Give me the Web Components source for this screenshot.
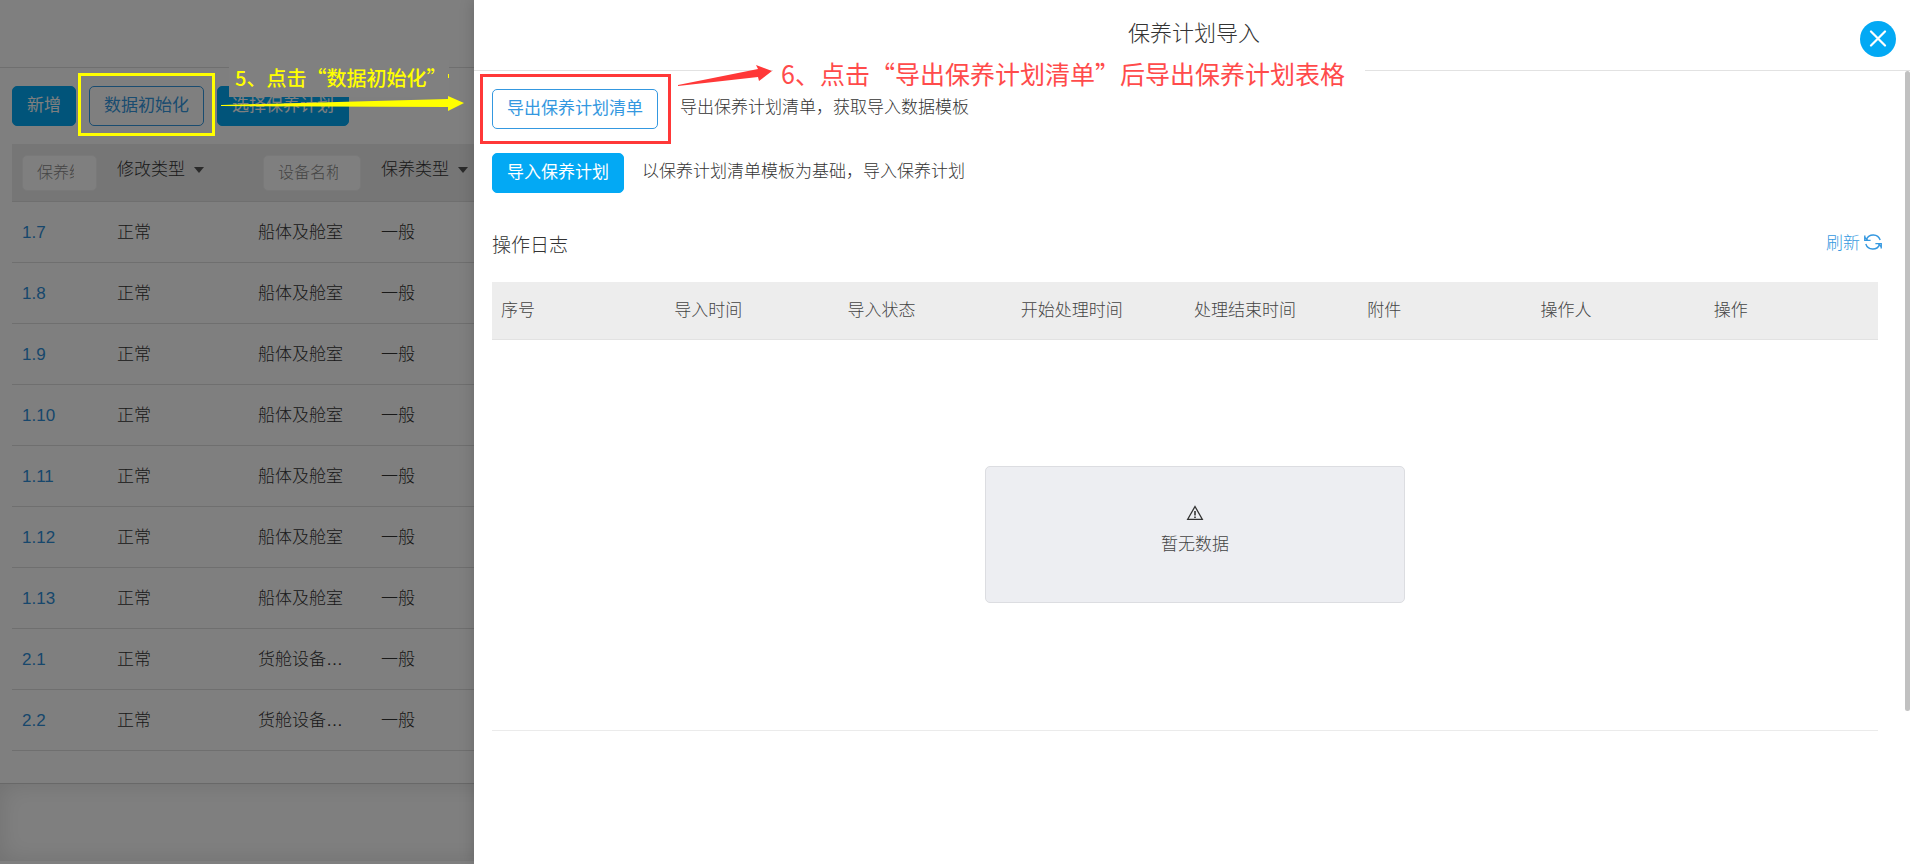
<!DOCTYPE html>
<html lang="zh-CN">
<head>
<meta charset="utf-8">
<title>保养计划导入</title>
<style>
  html, body { margin: 0; height: 100%; overflow: hidden; }
  body {
    font-family: "Liberation Sans", "Noto Sans CJK SC", sans-serif;
    font-size: 17px; font-weight: 300; line-height: 24px; color: #333; background: #fff;
  }
</style>
</head>
<body>
<maintenance-app></maintenance-app>

<script>
const define = (name, html, setup) => {
  const template = document.createElement('template');
  template.innerHTML = html;
  customElements.define(name, class extends HTMLElement {
    constructor() {
      super();
      this.attachShadow({ mode: 'open' }).append(template.content.cloneNode(true));
    }
    connectedCallback() { if (setup) setup(this, this.shadowRoot); }
  });
};

define('ui-button', `
  <style>
    :host { display: inline-block; }
    button {
      display: block; box-sizing: border-box; height: 40px; padding: 0 14px; margin: 0;
      border: 1px solid #03a9f4; border-radius: 5px; background: #03a9f4; color: #fff;
      font: inherit; font-weight: 400; white-space: nowrap; cursor: pointer;
    }
    :host([outline]) button { background: transparent; color: #3498e0; border-color: #3498e0; }
  </style>
  <button type="button"><slot></slot></button>`);

define('filter-input', `
  <style>
    :host { display: block; }
    input {
      display: block; box-sizing: border-box; width: 100%; height: 36px; margin: 0;
      padding: 0 22px 0 14px; border: 1px solid #f2f2f2; border-radius: 5px; background: #fff;
      font: inherit; font-size: 16px;
    }
    input::placeholder { color: #8a8a8a; opacity: 1; }
  </style>
  <input type="text">`, (host, root) => {
    const input = root.querySelector('input');
    input.placeholder = host.getAttribute('label');
    input.setAttribute('aria-label', host.getAttribute('label'));
  });

define('filter-select', `
  <style>
    :host { display: flex; align-items: center; gap: 9px; padding-bottom: 6px; }
    select {
      appearance: none; border: 0; margin: 0; padding: 0; background: none;
      font: inherit; color: #333; height: 24px;
    }
    svg { display: block; flex: none; }
  </style>
  <select><option></option></select>
  <svg width="10" height="6" viewBox="0 0 10 6"><path d="M0 0h10L5 6z" fill="#555"/></svg>`, (host, root) => {
    root.querySelector('option').textContent = host.getAttribute('label');
    root.querySelector('select').setAttribute('aria-label', host.getAttribute('label'));
  });

define('plan-table', `
  <style>
    :host { display: block; }
    table { width: 100%; border-collapse: separate; border-spacing: 0; table-layout: fixed; }
    th, td { box-sizing: border-box; padding: 0; text-align: left; font-weight: inherit; border-bottom: 1px solid #dedede; }
    th { height: 58px; background: #ececec; }
    td { height: 61px; padding-top: 2px; white-space: nowrap; overflow: hidden; text-overflow: ellipsis; }
    th:first-child, td:first-child { padding-left: 10px; }
    th:nth-child(3) { padding-left: 5px; }
    .c1 { width: 105px } .c2 { width: 141px } .c3 { width: 123px } .c4 { width: 93px }
    th:nth-child(1) { padding-right: 20px; }
    th:nth-child(3) { padding-right: 20px; }
    a { color: #2f8fd8; text-decoration: none; font-weight: 400; }
  </style>
  <table>
    <colgroup><col class="c1"><col class="c2"><col class="c3"><col class="c4"><col></colgroup>
    <thead><tr>
      <th><filter-input label="保养编号"></filter-input></th>
      <th><filter-select label="修改类型"></filter-select></th>
      <th><filter-input label="设备名称"></filter-input></th>
      <th><filter-select label="保养类型"></filter-select></th>
      <th></th>
    </tr></thead>
    <tbody></tbody>
  </table>`, (host, root) => {
    const hull = '船体及舱室', cargo = '货舱设备…';
    const rows = [['1.7', hull], ['1.8', hull], ['1.9', hull], ['1.10', hull], ['1.11', hull],
      ['1.12', hull], ['1.13', hull], ['2.1', cargo], ['2.2', cargo]];
    root.querySelector('tbody').innerHTML = rows.map(([code, device]) =>
      `<tr><td><a href="#">${code}</a></td><td>正常</td><td>${device}</td><td>一般</td><td></td></tr>`).join('');
  });

define('plan-page', `
  <style>
    :host { display: flex; flex-direction: column; min-height: 100vh; background: #fff; }
    header { height: 67px; border-bottom: 1px solid #dedede; }
    main { padding: 18px 0 32px 12px; border-bottom: 1px solid #d0d0d0; }
    nav { display: flex; gap: 13px; margin-bottom: 18px; }
    footer { flex: 1; margin-bottom: 3px; box-shadow: inset 0 0 24px rgba(0,0,0,.12); }
  </style>
  <header></header>
  <main>
    <nav>
      <ui-button>新增</ui-button>
      <ui-button outline>数据初始化</ui-button>
      <ui-button>选择保养计划</ui-button>
    </nav>
    <plan-table></plan-table>
  </main>
  <footer></footer>`);

define('empty-notice', `
  <style>
    :host {
      display: flex; flex-direction: column; align-items: center; justify-content: center; gap: 12px;
      box-sizing: border-box; width: 420px; height: 137px; padding-bottom: 8px;
      border: 1px solid #dcdde1; border-radius: 5px; background: #edeef2; color: #444;
    }
    svg { display: block; }
  </style>
  <svg width="18" height="16" viewBox="0 0 18 16" fill="none" stroke="#333">
    <path d="M9 1.5 16.3 14.3H1.7z" stroke-width="1.3"/>
    <path d="M9 6v4.5M9 11.4v1.5" stroke-width="1.6"/>
  </svg>
  <slot></slot>`);

define('operation-log', `
  <style>
    :host { display: block; }
    .bar { display: flex; justify-content: space-between; padding-right: 16px; margin-bottom: 22px; }
    h2 { margin: 0; font-size: 19px; font-weight: 300; line-height: 28px; }
    a { display: flex; align-items: center; gap: 4px; height: 24px; color: #3498e0; text-decoration: none; }
    svg { display: block; margin-bottom: 4px; }
    .list { margin-right: 20px; }
    table { width: 100%; table-layout: fixed; border-spacing: 0; }
    th {
      box-sizing: border-box; height: 58px; padding: 0 0 0 9px; text-align: left; font-weight: 300;
      color: #444; background: #ededed; border-bottom: 1px solid #e2e2e2;
    }
    .empty { display: flex; justify-content: center; padding: 126px 0 127px; }
    hr { margin: 0 20px 0 0; border: 0; border-top: 1px solid #ebebeb; }
  </style>
  <div class="bar">
    <h2>操作日志</h2>
    <a href="#">刷新
      <svg width="18" height="18" viewBox="0 0 18 18" fill="none" stroke="#3498e0" stroke-width="1.4">
        <path d="M2.4 6.4A7.4 7.4 0 0 1 16.2 7M15.6 11.6A7.4 7.4 0 0 1 1.8 11"/>
        <path d="M.8 2.4V7.4H6.6M17.2 15.6V10.6H11.4"/>
        <path d="M.8 4.6 3.6 7.2M17.2 13.4 14.4 10.8"/>
      </svg>
    </a>
  </div>
  <div class="list">
    <table><thead><tr>
      <th>序号</th><th>导入时间</th><th>导入状态</th><th>开始处理时间</th>
      <th>处理结束时间</th><th>附件</th><th>操作人</th><th>操作</th>
    </tr></thead></table>
  </div>
  <div class="empty"><empty-notice>暂无数据</empty-notice></div>
  <hr>`);

define('import-drawer', `
  <style>
    :host { display: flex; flex-direction: column; background: #fff; box-shadow: 0 0 14px rgba(0,0,0,.18); }
    header {
      display: grid; grid-template-columns: 1fr 50px; align-items: start; box-sizing: border-box;
      height: 71px; border-bottom: 1px solid #e2e2e2;
    }
    h1 { margin: 18px 0 0 54px; text-align: center; font-size: 22px; line-height: 32px; font-weight: 300; }
    header button {
      display: grid; place-items: center; width: 36px; height: 36px; margin: 21px 0 0; padding: 0;
      border: 0; border-radius: 50%; background: #03a9f4; cursor: pointer;
    }
    .body { flex: 1; display: grid; grid-template-columns: 1fr 5px; }
    .content { padding: 18px 7px 0 18px; }
    .action { display: flex; align-items: center; height: 40px; margin-bottom: 24px; gap: 18px; }
    .action p { margin: 0 0 2px; }
    .action.close { gap: 22px; }
    operation-log { margin-top: 39px; }
    .thumb { height: 640px; border-radius: 4px; background: #c1c1c1; }
  </style>
  <header>
    <h1>保养计划导入</h1>
    <button type="button" aria-label="关闭">
      <svg width="18" height="18" viewBox="0 0 18 18" stroke="#fff" stroke-width="2.2" stroke-linecap="round"><path d="M2 1.5 16 15.5M16 1.5 2 15.5"/></svg>
    </button>
  </header>
  <div class="body">
    <div class="content">
      <div class="action close"><ui-button outline>导出保养计划清单</ui-button><p>导出保养计划清单，获取导入数据模板</p></div>
      <div class="action"><ui-button>导入保养计划</ui-button><p>以保养计划清单模板为基础，导入保养计划</p></div>
      <operation-log></operation-log>
    </div>
    <div class="thumb"></div>
  </div>`);

define('step-frame', `
  <style>:host { display: block; position: absolute; box-sizing: border-box; border: 3px solid; }</style>`);

define('step-note', `
  <style>
    :host { display: block; position: absolute; box-sizing: border-box; white-space: nowrap; font-weight: 400;
      font-family: "Noto Sans CJK SC", sans-serif; }
    :host([strong]) { font-weight: 500; }
  </style>
  <slot></slot>`);

define('maintenance-app', `
  <style>
    :host { display: block; position: relative; min-height: 100vh; overflow: hidden; }
    .mask { position: absolute; inset: 0; background: rgba(0,0,0,.5); }
    import-drawer { position: absolute; top: 0; right: 0; bottom: 0; left: 474px; }
    .frame5 { left: 78px; top: 73px; width: 137px; height: 63px; color: #ff0; }
    .frame6 { left: 480px; top: 74px; width: 191px; height: 70px; color: #ff3838; }
    .note5 { left: 229px; top: 60px; width: 220px; height: 37px; padding: 4px 6px;
      background: #808080; color: #ff0; font-size: 20px; line-height: 28px; }
    .note6 { left: 773px; top: 57px; width: 592px; height: 32px; padding: 0 8px;
      background: #fff; color: #ff4b4b; font-size: 25px; line-height: 32px; }
    svg { position: absolute; display: block; }
    .arrow5 { left: 220px; top: 73px; }
    .arrow6 { left: 677px; top: 64px; }
  </style>
  <plan-page></plan-page>
  <div class="mask"></div>
  <import-drawer></import-drawer>
  <step-frame class="frame5"></step-frame>
  <step-note class="note5" strong>5、点击“数据初始化”</step-note>
  <svg class="arrow5" width="246" height="40" viewBox="0 -22 246 40" fill="#ff0"><path d="M1 10 228 4V1L244 8 228 16V12L1 11z"/><path d="M228-21h1v4h-1z"/></svg>
  <step-frame class="frame6"></step-frame>
  <step-note class="note6">6、点击“导出保养计划清单”后导出保养计划表格</step-note>
  <svg class="arrow6" width="96" height="24" viewBox="0 0 96 24" fill="#ff3838"><path d="M1 21 81 5 79 1 95 7 82 17 81 13 1 22z"/></svg>`);
</script>
</body>
</html>
